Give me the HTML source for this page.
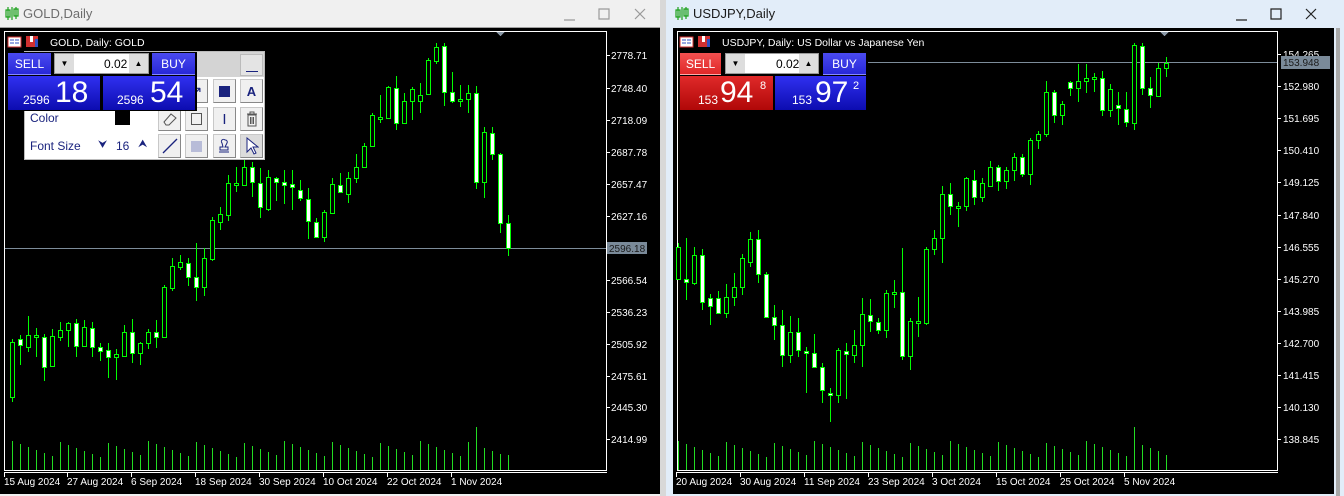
<!DOCTYPE html>
<html><head><meta charset="utf-8">
<style>
*{margin:0;padding:0;box-sizing:border-box}
body{width:1344px;height:496px;overflow:hidden;background:#f0f0f0;font-family:"Liberation Sans",sans-serif;position:relative}
.abs{position:absolute}
.t{font-size:12px}
.btn{position:absolute;display:flex;align-items:center;justify-content:center;color:#fff;font-size:12px}
.tb{position:absolute;width:23px;height:24px;background:#f0f0f0;border:1px solid #c8c8c8;border-right-color:#888;border-bottom-color:#888;display:flex;align-items:center;justify-content:center}
</style></head><body>
<div class="abs" style="left:0;top:0;width:662px;height:28px;background:#f0f0f0;border-bottom:1px solid #a0a0a0"></div>
<div class="abs" style="left:23px;top:6px;color:#6d6d6d;font-size:13px">GOLD,Daily</div>
<div class="abs" style="left:666px;top:0;width:678px;height:496px;background:#e2edf9"></div>
<div class="abs" style="left:660px;top:0;width:6px;height:496px;background:#d8d8d8"></div>
<div class="abs" style="left:693px;top:6px;color:#1a1a1a;font-size:13px">USDJPY,Daily</div>
<div class="abs" style="left:0;top:28px;width:660px;height:466px;background:#000"></div>
<div class="abs" style="left:673px;top:28px;width:661px;height:466px;background:#000"></div>
<div class="abs" style="left:1336px;top:28px;width:4px;height:468px;background:#a8a8a8"></div>
<svg class="abs" style="left:0;top:0" width="1344" height="496" id="s">
<g stroke="#1aa01a" fill="none" stroke-width="1.2">
<path d="M8 7v13M12 7v13M6 10h4v7h-4zM14 9h4v7h-4zM16 7v12"/>
<path d="M678 7v13M682 7v13M676 10h4v7h-4zM684 9h4v7h-4zM686 7v12"/>
</g>
<g stroke="#9a9a9a" stroke-width="1.2" fill="none">
<path d="M564 20h11M599 9h10v10h-10zM635 9l10 10M645 9l-10 10"/>
</g>
<g stroke="#222" stroke-width="1.2" fill="none">
<path d="M1236 20h11M1271 9h10v10h-10zM1306 9l10 10M1316 9l-10 10"/>
</g>
</svg>
<script>
const S=document.getElementById('s');let h='<g shape-rendering="crispEdges">';
const F=Math.round;
function rc(x,y,w,hh,c){h+=`<rect x="${x}" y="${y}" width="${w}" height="${hh}" fill="${c}"/>`}
function frame(x0,x1,y0,y1){rc(x0,y0,x1-x0+1,1,'#fff');rc(x0,y1,x1-x0+1,1,'#fff');rc(x0,y1+2,x1-x0+1,1,'#fff');rc(x0,y0,1,y1-y0,'#fff');rc(x1,y0,1,y1-y0,'#fff')}
frame(4,606,31,470);frame(677,1277,31,470);
function candles(d,x0){d.forEach((c,i)=>{const x=F(x0+8*i);const y=v=>F(30+v/3);
let bt=y(c[0]),bb=y(c[1]);if(bb-bt<2)bb=bt+2;
rc(x,y(c[2]),1,y(c[3])-y(c[2]),'#00ff00');
rc(x-2,bt,5,bb-bt+1,'#00ff00');rc(x-1,bt+1,3,bb-bt-1,c[4]?'#fff':'#000');});}
const G=[[935,1100,928,1115,0],[928,945,915,1005,1],[915,950,858,965,0],[915,920,895,980,0],[922,1010,912,1052,1],[918,1007,898,1010,0],[900,922,875,932,0],[880,900,875,950,0],[880,948,867,980,1],[890,948,870,952,0],[895,950,875,980,1],[952,962,938,992,1],[960,982,938,1045,1],[972,982,958,1050,0],[907,977,885,980,0],[907,968,868,1000,1],[940,970,935,1005,0],[907,940,898,958,0],[907,922,870,955,1],[770,922,765,925,0],[708,775,685,782,0],[697,710,675,720,0],[700,740,685,768,1],[740,772,640,812,1],[685,772,655,797,0],[570,688,560,692,0],[552,575,530,600,0],[460,555,435,572,0],[460,463,410,485,0],[410,465,390,468,0],[412,456,395,500,1],[460,532,415,565,1],[440,538,420,542,0],[443,456,440,512,1],[457,466,420,522,1],[463,472,420,540,1],[480,505,450,512,1],[508,573,475,628,1],[575,620,565,625,1],[547,620,540,636,0],[463,548,445,553,0],[465,485,430,490,1],[445,493,425,520,0],[410,445,372,458,0],[348,410,338,412,0],[256,348,250,352,0],[262,265,195,280,0],[170,263,168,265,0],[173,280,138,300,1],[212,280,190,282,0],[178,212,172,270,0],[195,212,160,248,0],[90,193,85,195,0],[50,92,40,102,0],[48,187,40,228,1],[185,212,125,220,1],[208,211,165,230,0],[188,208,165,248,0],[190,455,168,478,1],[305,455,290,505,0],[308,372,290,390,1],[372,580,368,610,1],[580,655,555,678,1]];
const U=[[652,748,640,750,0],[748,757,625,810,1],[675,760,650,765,0],[675,815,658,840,1],[805,828,792,885,1],[805,848,782,850,1],[800,848,762,865,0],[770,800,728,828,0],[683,772,672,795,0],[628,695,605,710,0],[628,733,600,760,1],[733,862,725,865,1],[862,885,825,930,1],[885,975,840,1010,1],[905,975,858,1000,0],[907,960,865,980,1],[962,968,950,1090,1],[968,1010,912,1015,1],[1010,1080,1000,1120,1],[1090,1096,1075,1175,1],[960,1096,955,1118,0],[962,972,940,1108,1],[946,975,900,1000,0],[853,946,805,1012,0],[855,873,808,905,1],[875,900,865,912,1],[788,900,780,925,0],[785,788,750,835,0],[785,978,655,990,1],[872,978,865,1020,0],[872,877,800,920,0],[658,878,652,885,0],[625,658,600,675,0],[493,625,468,700,0],[493,528,460,555,1],[528,530,515,592,0],[445,528,440,542,0],[450,502,420,525,1],[460,502,445,515,0],[412,468,392,472,0],[412,452,405,482,1],[420,452,410,478,0],[380,420,368,452,0],[380,432,372,440,1],[330,432,325,465,0],[313,330,302,357,0],[187,313,152,322,0],[187,255,180,278,1],[222,255,212,285,0],[155,175,152,198,1],[152,175,102,215,0],[143,152,102,188,0],[142,146,130,185,0],[145,240,122,258,1],[178,240,162,262,0],[225,235,185,285,1],[237,275,185,292,1],[45,280,40,300,0],[47,175,40,195,1],[175,195,140,235,1],[115,197,98,202,0],[98,115,80,140,0]];
rc(5,248,601,1,'#7d8c9a');rc(820,62,457,1,'#7d8c9a');
function vols(n,x0,big){for(let i=0;i<n;i++){let t=441+((i*37)%17);if(i==big)t=427;if(i==n-1)t=455;const x=F(x0+8*i);rc(x,t,1,470-t,'#22dd22')}}
vols(63,12,58);vols(62,678,57);
candles(G,12);candles(U,678);
h+=`<path d="M496 32h9l-4.5 4z" fill="#8a98a6"/><path d="M1160 32h9l-4.5 4z" fill="#8a98a6"/>`;
const gl=[['2778.71',55],['2748.40',88],['2718.09',120],['2687.78',152],['2657.47',184],['2627.16',216],['2566.54',280],['2536.23',312],['2505.92',344],['2475.61',376],['2445.30',407],['2414.99',439]];
gl.forEach(a=>rc(606,a[1],4,1,'#fff'));
const ul=['154.265','152.980','151.695','150.410','149.125','147.840','146.555','145.270','143.985','142.700','141.415','140.130','138.845'];
ul.forEach((a,i)=>rc(1277,F(54+i*32.1),4,1,'#fff'));
const gd=[['15 Aug 2024',4],['27 Aug 2024',67],['6 Sep 2024',131],['18 Sep 2024',195],['30 Sep 2024',259],['10 Oct 2024',323],['22 Oct 2024',387],['1 Nov 2024',451]];
const ud=[['20 Aug 2024',676],['30 Aug 2024',740],['11 Sep 2024',804],['23 Sep 2024',868],['3 Oct 2024',932],['15 Oct 2024',996],['25 Oct 2024',1060],['5 Nov 2024',1124]];
gd.concat(ud).forEach(a=>rc(a[1],472,1,5,'#fff'));
h+='</g>';
gl.forEach(a=>{h+=`<text x="611" y="${a[1]+4}" fill="#fff" font-size="10" font-family="Liberation Sans">${a[0]}</text>`});
ul.forEach((a,i)=>{h+=`<text x="1283" y="${F(54+i*32.1)+4}" fill="#fff" font-size="10" font-family="Liberation Sans">${a}</text>`});
h+=`<rect x="607" y="242" width="40" height="12" fill="#7a8a99"/><text x="609" y="252" fill="#1a1a1a" font-size="10" font-family="Liberation Sans">2596.18</text>`;
h+=`<rect x="1281" y="56" width="49" height="13" fill="#7a8a99"/><text x="1283" y="66" fill="#1a1a1a" font-size="10" font-family="Liberation Sans">153.948</text>`;
gd.concat(ud).forEach(a=>{h+=`<text x="${a[1]}" y="485" fill="#fff" font-size="10" font-family="Liberation Sans">${a[0]}</text>`});
function hdr(x){h+=`<rect x="${x}" y="37" width="13" height="10" fill="#fff" stroke="#d03030"/><path d="M${x+2} 40h4M${x+7} 40h4M${x+2} 43h4M${x+7} 43h4" stroke="#3050c0"/><rect x="${x+18}" y="36" width="12" height="11" fill="#d03030"/><rect x="${x+22}" y="36" width="3" height="6" fill="#fff"/><rect x="${x+27}" y="39" width="3" height="8" fill="#3050c0"/>`}
hdr(8);hdr(680);
h+=`<text x="50" y="46" fill="#fff" font-size="10.5" font-family="Liberation Sans">GOLD, Daily:  GOLD</text><text x="722" y="46" fill="#fff" font-size="10.5" font-family="Liberation Sans">USDJPY, Daily:  US Dollar vs Japanese Yen</text>`;
S.innerHTML+=h;
</script>
<div class="abs" style="left:24px;top:51px;width:241px;height:109px;background:#fff;border:1px solid #bbb"></div>
<div class="abs" style="left:196px;top:52px;width:68px;height:25px;background:#d4d4d4"></div>
<div class="abs" style="left:240px;top:54px;width:23px;height:22px;background:#e4e4e4;border:1px solid #bbb"><div class="abs" style="left:5px;top:16px;width:12px;height:1px;background:#1a237e"></div></div>
<div class="abs t" style="left:30px;top:111px;color:#1a237e">Color</div>
<div class="abs" style="left:115px;top:111px;width:15px;height:14px;background:#000"></div>
<div class="abs t" style="left:30px;top:139px;color:#1a237e">Font Size</div>
<div class="abs" style="left:98px;top:139px;color:#1a237e;font-size:11px">⮟</div>
<div class="abs t" style="left:116px;top:139px;color:#1a237e">16</div>
<div class="abs" style="left:138px;top:138px;color:#1a237e;font-size:11px">⮝</div>
<div class="tb" style="left:185px;top:79px;font-size:14px;color:#1a237e">↗</div>
<div class="tb" style="left:213px;top:79px"><div style="width:11px;height:11px;background:#1a237e"></div></div>
<div class="tb" style="left:240px;top:79px;font-weight:bold;font-size:13px;color:#1a237e">A</div>
<div class="tb" style="left:158px;top:107px"><svg width="16" height="14"><path d="M2 10l7-8 5 4-7 7H4z" fill="none" stroke="#555"/></svg></div>
<div class="tb" style="left:185px;top:107px"><div style="width:11px;height:12px;border:1px solid #555"></div></div>
<div class="tb" style="left:213px;top:107px;color:#1a237e;font-size:15px">I</div>
<div class="tb" style="left:240px;top:107px"><svg width="14" height="16"><path d="M2 3h10M5 3V1h4v2M3 4h8v11H3zM5.5 6v7M7 6v7M8.5 6v7" fill="none" stroke="#555"/></svg></div>
<div class="tb" style="left:158px;top:134px"><svg width="18" height="18"><path d="M2 16L16 2" stroke="#1a237e" stroke-width="1.3"/></svg></div>
<div class="tb" style="left:185px;top:134px"><div style="width:11px;height:11px;background:#b8bcd8"></div></div>
<div class="tb" style="left:213px;top:134px"><svg width="16" height="16"><path d="M8 2a2 2 0 012 3l-2 4h3v3H3v-3h3L5 5a2 2 0 013-3zM2 14h10" fill="none" stroke="#1a237e"/></svg></div>
<div class="tb" style="left:240px;top:134px;background:#dcdcdc"><svg width="14" height="18"><path d="M2 1v14l4-4 3 6 2-1-3-6h5z" fill="#fff" stroke="#1a237e"/></svg></div>
<div class="abs" style="left:7px;top:52px;width:190px;height:59px;background:#000"></div>
<div class="btn" style="left:8px;top:53px;width:43px;height:22px;background:linear-gradient(#4a4af0,#2828d8);border-bottom:1px solid #8888ff">SELL</div>
<div class="btn" style="left:152px;top:53px;width:43px;height:22px;background:linear-gradient(#4a4af0,#2828d8);border-bottom:1px solid #8888ff">BUY</div>
<div class="abs" style="left:54px;top:53px;width:95px;height:21px;background:#fff;border:1px solid #999"></div>
<div class="btn" style="left:55px;top:54px;width:19px;height:19px;background:#ddd;color:#000;font-size:8px">▼</div>
<div class="btn" style="left:129px;top:54px;width:19px;height:19px;background:#ddd;color:#000;font-size:8px">▲</div>
<div class="abs t" style="left:104px;top:57px;color:#000">0.02</div>
<div class="abs" style="left:8px;top:76px;width:92px;height:34px;background:linear-gradient(#3030f0,#0c0cb0)"><span class="abs" style="left:15px;top:17px;color:#fff;font-size:12px">2596</span><span class="abs" style="left:47px;top:0;color:#fff;font-size:30px">18</span></div>
<div class="abs" style="left:103px;top:76px;width:92px;height:34px;background:linear-gradient(#3030f0,#0c0cb0)"><span class="abs" style="left:14px;top:17px;color:#fff;font-size:12px">2596</span><span class="abs" style="left:47px;top:0;color:#fff;font-size:30px">54</span></div>
<div class="abs" style="left:679px;top:52px;width:189px;height:59px;background:#000"></div>
<div class="btn" style="left:680px;top:53px;width:41px;height:22px;background:linear-gradient(#f25050,#e02828);border-bottom:1px solid #ffaaaa">SELL</div>
<div class="btn" style="left:823px;top:53px;width:43px;height:22px;background:linear-gradient(#4a4af0,#2828d8);border-bottom:1px solid #8888ff">BUY</div>
<div class="abs" style="left:725px;top:53px;width:94px;height:21px;background:#fff;border:1px solid #999"></div>
<div class="btn" style="left:726px;top:54px;width:19px;height:19px;background:#ddd;color:#000;font-size:8px">▼</div>
<div class="btn" style="left:799px;top:54px;width:19px;height:19px;background:#ddd;color:#000;font-size:8px">▲</div>
<div class="abs t" style="left:776px;top:57px;color:#000">0.02</div>
<div class="abs" style="left:680px;top:76px;width:93px;height:34px;background:linear-gradient(#e02a2a,#b00808)"><span class="abs" style="left:18px;top:17px;color:#fff;font-size:12px">153</span><span class="abs" style="left:40px;top:0;color:#fff;font-size:30px">94</span><span class="abs" style="left:80px;top:4px;color:#fff;font-size:11px">8</span></div>
<div class="abs" style="left:775px;top:76px;width:91px;height:34px;background:linear-gradient(#3030f0,#0c0cb0)"><span class="abs" style="left:17px;top:17px;color:#fff;font-size:12px">153</span><span class="abs" style="left:40px;top:0;color:#fff;font-size:30px">97</span><span class="abs" style="left:78px;top:4px;color:#fff;font-size:11px">2</span></div>
</body></html>
